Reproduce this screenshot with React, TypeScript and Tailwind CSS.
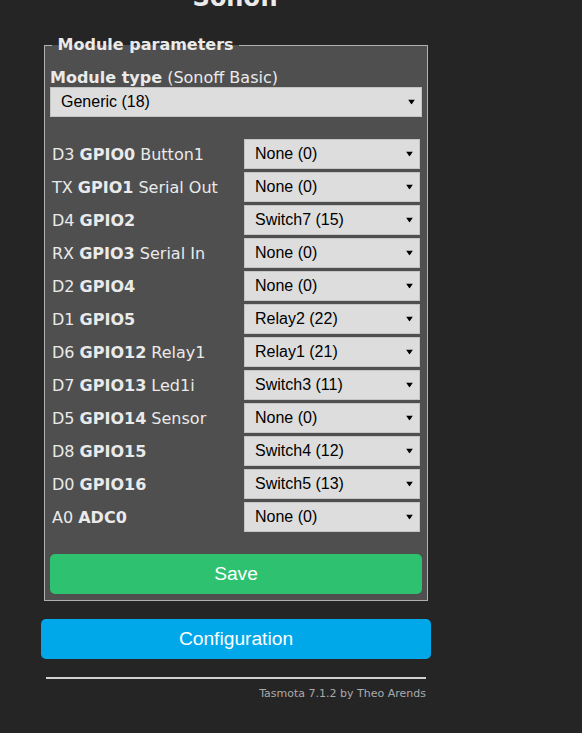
import React from 'react'

const rows: { pin: string; gpio: string; note?: string; value: string }[] = [
  { pin: 'D3', gpio: 'GPIO0', note: 'Button1', value: 'None (0)' },
  { pin: 'TX', gpio: 'GPIO1', note: 'Serial Out', value: 'None (0)' },
  { pin: 'D4', gpio: 'GPIO2', value: 'Switch7 (15)' },
  { pin: 'RX', gpio: 'GPIO3', note: 'Serial In', value: 'None (0)' },
  { pin: 'D2', gpio: 'GPIO4', value: 'None (0)' },
  { pin: 'D1', gpio: 'GPIO5', value: 'Relay2 (22)' },
  { pin: 'D6', gpio: 'GPIO12', note: 'Relay1', value: 'Relay1 (21)' },
  { pin: 'D7', gpio: 'GPIO13', note: 'Led1i', value: 'Switch3 (11)' },
  { pin: 'D5', gpio: 'GPIO14', note: 'Sensor', value: 'None (0)' },
  { pin: 'D8', gpio: 'GPIO15', value: 'Switch4 (12)' },
  { pin: 'D0', gpio: 'GPIO16', value: 'Switch5 (13)' },
  { pin: 'A0', gpio: 'ADC0', value: 'None (0)' },
]

function Select({ value, className = '' }: { value: string; className?: string }) {
  return (
    <div className={`relative ${className}`}>
      <select
        defaultValue={value}
        className="block h-[30px] w-full appearance-none border border-[#c4c4c4] bg-[#dddddd] pl-[10px] font-['Liberation_Sans',Arial,sans-serif] text-[16px] text-black outline-none"
      >
        <option>{value}</option>
      </select>
      <svg
        className="pointer-events-none absolute right-[7px] top-1/2 -translate-y-1/2"
        width="7"
        height="5"
        viewBox="0 0 7 5"
      >
        <path d="M0 0h7L3.5 5z" fill="#000" />
      </svg>
    </div>
  )
}

export default function App() {
  return (
    <div className="min-h-screen overflow-hidden bg-[#252525] font-['DejaVu_Sans',Verdana,sans-serif] text-[16px] text-[#eaeaea]">
      <div className="ml-[41px] w-[390px]">
        <h2 className="-mt-[16px] text-center text-[24px] font-bold leading-[28px]">Sonoff</h2>

        <fieldset className="mx-[3px] mt-[24px] border border-[#b0b0b0] bg-[#4f4f4f] px-[5px] pb-[6px] pt-[15px]">
          <legend className="ml-[2px] font-bold leading-[18px]">{'\u00a0Module parameters\u00a0'}</legend>

          <div className="leading-[18px]">
            <b>Module type</b> (Sonoff Basic)
          </div>
          <Select value="Generic (18)" />

          <div className="mt-[22px] flex flex-col gap-[3px] px-[2px]">
            {rows.map((r) => (
              <div key={r.gpio} className="flex items-center justify-between">
                <span className="pt-[2px] leading-[18px]">
                  {r.pin} <b>{r.gpio}</b>
                  {r.note ? ` ${r.note}` : ''}
                </span>
                <Select value={r.value} className="w-[176px]" />
              </div>
            ))}
          </div>

          <button
            type="button"
            className="mt-[22px] h-[40px] w-full rounded-[5px] bg-[#2ec16f] font-['Liberation_Sans',Arial,sans-serif] text-[19.2px] text-white"
          >
            Save
          </button>
        </fieldset>

        <button
          type="button"
          className="mt-[18px] h-[40px] w-full rounded-[5px] bg-[#00a8e9] font-['Liberation_Sans',Arial,sans-serif] text-[19.2px] text-white"
        >
          Configuration
        </button>

        <div className="px-[5px]">
          <hr className="mt-[18px] h-[2px] border-0 bg-[#d2d2d2]" />
          <div className="mt-[7px] text-right text-[11px] text-[#aaaaaa]">Tasmota 7.1.2 by Theo Arends</div>
        </div>
      </div>
    </div>
  )
}
